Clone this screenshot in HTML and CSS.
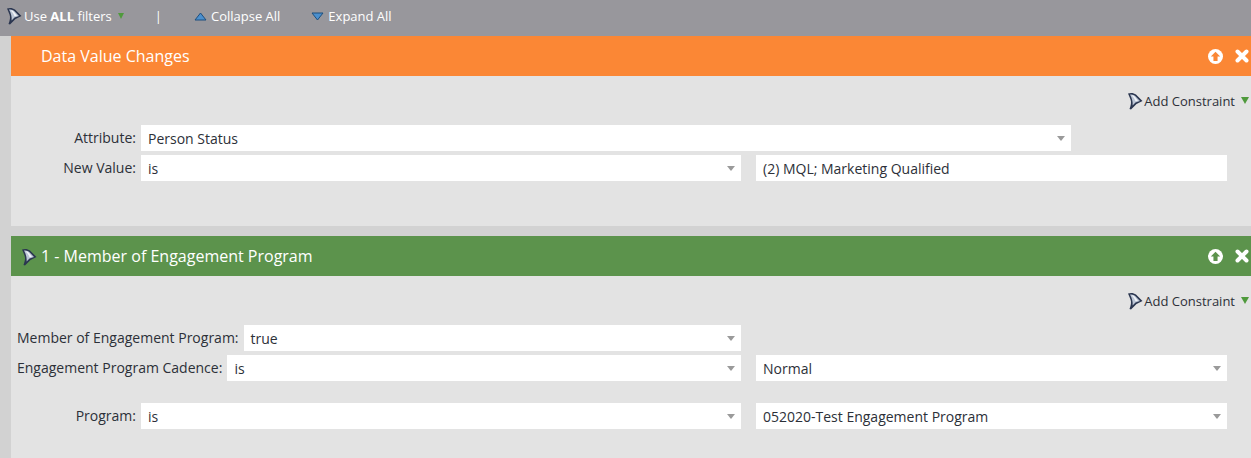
FILE: index.html
```html
<!DOCTYPE html>
<html lang="en">
<head>
    <meta charset="UTF-8">
    <title>Smart List Filters</title>
    <link rel="stylesheet" href="styles.css">
</head>
<body>
    <svg class="icon-defs" width="0" height="0">
        <symbol id="funnel" viewBox="0 0 16 18">
            <path d="M1 1.500 C4 0.500 7 1 9 2.500 L15.500 9 L9.500 12 L4 17.500 L2.500 17 C4 13 4.500 10 3.500 7.500 C2.800 5.500 1.800 3.500 1 1.500 Z" fill="#2b3650"/>
            <path d="M3 2.600 C5.500 2.200 7 3 8.500 4.300 L13 8.900 L8.500 10.500 L5.600 13.500 C6 10 5 6 3 2.600 Z" fill="#bcc6d6"/>
            <path d="M4.500 3.200 C6 3.200 7 4 8 5 L11 8.800 L8.500 9.300 C7.800 7 6.500 5 4.500 3.200 Z" fill="#f2f4f8"/>
        </symbol>
        <symbol id="close-x" viewBox="0 0 14 14">
            <path d="M2.500 2.500 L11.500 11.500 M11.500 2.500 L2.500 11.500" stroke="#fff" stroke-width="4" stroke-linecap="round"/>
        </symbol>
    </svg>

    <div class="toolbar">
        <span class="tool tool-filters">
            <svg class="funnel"><use href="#funnel"/></svg>
            <span>Use <b>ALL</b> filters</span>
            <span class="green-arrow"></span>
        </span>
        <span class="tool-sep">|</span>
        <span class="tool tool-collapse">
            <svg class="tri" viewBox="0 0 13 9"><path d="M6.500 1 L12 8 L1 8 Z" fill="#4b8fcd" stroke="#1d4f7f"/></svg>
            Collapse All
        </span>
        <span class="tool tool-expand">
            <svg class="tri" viewBox="0 0 13 9"><path d="M1 1 L12 1 L6.500 8 Z" fill="#4b8fcd" stroke="#1d4f7f"/></svg>
            Expand All
        </span>
    </div>

    <div class="filter-list">
        <div class="filter-card card-trigger">
            <div class="card-header header-orange">
                <span class="card-title title-plain">Data Value Changes</span>
                <span class="card-actions">
                    <svg class="up-icon" viewBox="0 0 16 16"><circle cx="8" cy="8" r="8" fill="#fff"/><path d="M8 2.800 L13 8 L10.200 8 L10.200 12.800 L5.800 12.800 L5.800 8 L3 8 Z" fill="#fb8735"/></svg>
                    <svg class="close-icon"><use href="#close-x"/></svg>
                </span>
            </div>
            <div class="card-body">
                <div class="constraint-row">
                    <svg class="funnel"><use href="#funnel"/></svg>
                    <span>Add Constraint</span>
                    <span class="green-arrow"></span>
                </div>
                <div class="field-row">
                    <label class="field-label">Attribute:</label>
                    <div class="select select-wide">Person Status</div>
                </div>
                <div class="field-row">
                    <label class="field-label">New Value:</label>
                    <div class="select select-grow">is</div>
                    <div class="text-value">(2) MQL; Marketing Qualified</div>
                </div>
            </div>
        </div>

        <div class="filter-card card-member">
            <div class="card-header header-green">
                <svg class="funnel header-funnel"><use href="#funnel"/></svg>
                <span class="card-title">1 - Member of Engagement Program</span>
                <span class="card-actions">
                    <svg class="up-icon" viewBox="0 0 16 16"><circle cx="8" cy="8" r="8" fill="#fff"/><path d="M8 2.800 L13 8 L10.200 8 L10.200 12.800 L5.800 12.800 L5.800 8 L3 8 Z" fill="#5c934c"/></svg>
                    <svg class="close-icon"><use href="#close-x"/></svg>
                </span>
            </div>
            <div class="card-body">
                <div class="constraint-row">
                    <svg class="funnel"><use href="#funnel"/></svg>
                    <span>Add Constraint</span>
                    <span class="green-arrow"></span>
                </div>
                <div class="field-row">
                    <label class="field-label">Member of Engagement Program:</label>
                    <div class="select select-grow">true</div>
                    <div class="value-spacer"></div>
                </div>
                <div class="field-row">
                    <label class="field-label">Engagement Program Cadence:</label>
                    <div class="select select-grow">is</div>
                    <div class="select select-value">Normal</div>
                </div>
                <div class="field-row row-spaced">
                    <label class="field-label">Program:</label>
                    <div class="select select-grow">is</div>
                    <div class="select select-value">052020-Test Engagement Program</div>
                </div>
            </div>
        </div>
    </div>
</body>
</html>
```

FILE: styles.css
```css
* {
    margin: 0;
    padding: 0;
    box-sizing: border-box;
    font-family: "Open Sans", "Liberation Sans", sans-serif;
}

html, body {
    height: 458px;
    overflow: hidden;
}

body {
    background-color: #d2d2d2;
    color: #2c3038;
    font-size: 13px;
}

.icon-defs {
    display: block;
    position: absolute;
}

.funnel {
    width: 16px;
    height: 18px;
    flex: none;
}

.toolbar {
    height: 36px;
    background-color: #98979c;
    color: #fff;
    display: flex;
    align-items: center;
    padding: 0 0 4px 6px;
    font-size: 13px;
}

.tool {
    display: flex;
    align-items: center;
}

.tool-filters {
    gap: 2px;
}

.tool-filters b {
    font-weight: 700;
}

.tool-filters .green-arrow {
    margin-left: 4px;
    border-left-width: 3.500px;
    border-right-width: 3.500px;
    border-top-width: 6px;
}

.tool-sep {
    margin-left: 31px;
}

.tool-collapse {
    margin-left: 32px;
    gap: 3px;
}

.tool-expand {
    margin-left: 31px;
    gap: 3px;
}

.tri {
    width: 13px;
    height: 9px;
    margin-right: 1px;
    flex: none;
}

.green-arrow {
    width: 0;
    height: 0;
    border-left: 4px solid transparent;
    border-right: 4px solid transparent;
    border-top: 7px solid #4f9a3c;
}

.filter-list {
    margin-left: 11px;
    display: flex;
    flex-direction: column;
    gap: 10px;
}

.card-header {
    height: 40px;
    display: flex;
    align-items: center;
    color: #fff;
    font-size: 16px;
    padding-right: 2px;
}

.header-orange {
    background-color: #fb8735;
}

.header-green {
    background-color: #5c934c;
}

.title-plain {
    margin-left: 30px;
}

.header-funnel {
    margin: 2px 4px 0 10px;
}

.card-actions {
    margin-left: auto;
    display: flex;
    align-items: center;
    gap: 12px;
}

.up-icon {
    width: 15px;
    height: 15px;
    display: block;
}

.close-icon {
    width: 14px;
    height: 14px;
    display: block;
}

.card-body {
    background-color: #e3e3e3;
    padding-bottom: 41px;
}

.card-member .card-body {
    padding-bottom: 40px;
}

.constraint-row {
    height: 49px;
    display: flex;
    align-items: center;
    justify-content: flex-end;
    padding-right: 2px;
}

.constraint-row .funnel {
    margin-right: 1px;
}

.constraint-row .green-arrow {
    margin-left: 6px;
}

.field-row {
    display: flex;
    align-items: flex-start;
    height: 26px;
    margin-bottom: 4px;
    padding: 0 24px 0 6px;
    line-height: 25px;
}

.row-spaced {
    margin-top: 22px;
}

.field-label {
    min-width: 119px;
    text-align: right;
    margin-right: 5px;
    white-space: nowrap;
    font-size: 14px;
}

.select, .text-value {
    height: 26px;
    background-color: #fff;
    padding-left: 7px;
    line-height: 28px;
    font-size: 14px;
    color: #2c3038;
    position: relative;
    white-space: nowrap;
}

.select::after {
    content: "";
    position: absolute;
    right: 6px;
    top: 11px;
    border-left: 4.500px solid transparent;
    border-right: 4.500px solid transparent;
    border-top: 5px solid #9a9a9a;
}

.select-wide {
    width: 930px;
}

.select-grow {
    flex: 1;
}

.select-value, .text-value, .value-spacer {
    width: 471px;
    margin-left: 15px;
}
```
